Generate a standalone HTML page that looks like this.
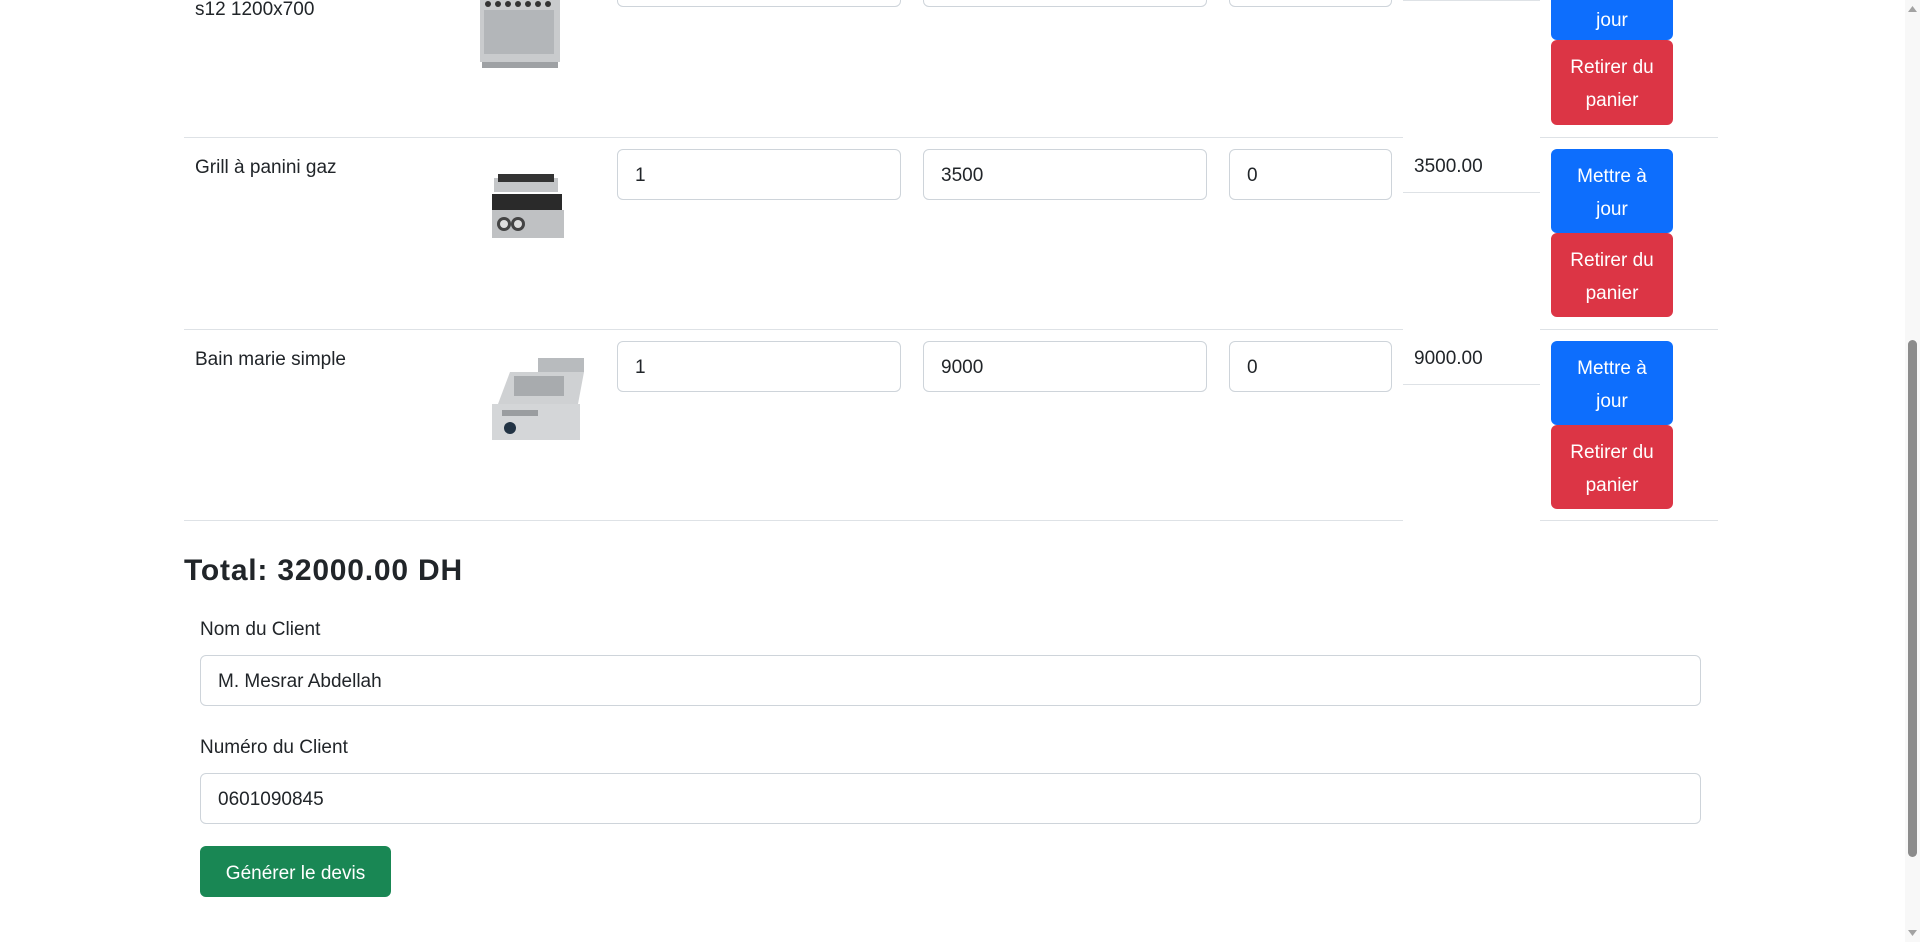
<!DOCTYPE html>
<html><head><meta charset="utf-8"><style>
*{box-sizing:border-box;margin:0;padding:0}
body{width:1920px;height:942px;overflow:hidden;background:#fff;font-family:"Liberation Sans",sans-serif;color:#212529;position:relative}
.a{position:absolute}
.t{font-size:19px;line-height:24px}
.in{position:absolute;border:1px solid #ced4da;border-radius:6px;background:#fff;font-size:19px;padding-left:17px;padding-top:3px;display:flex;align-items:center}
.hl{position:absolute;height:1px;background:#dee2e6}
.btn{position:absolute;color:#fff;font-size:19px;line-height:33px;text-align:center;border-radius:6px;display:flex;align-items:center;justify-content:center;padding-top:3px}
.b{background:#0d6efd}.r{background:#dc3545}
</style></head><body>

<div class="a t" style="left:195px;top:-2px">s12 1200x700</div>
<svg class="a" style="left:476px;top:0" width="110" height="72" viewBox="0 0 110 72">
<rect x="4" y="0" width="80" height="62" fill="#c9cbcd"/><rect x="8" y="10" width="70" height="44" fill="#b3b6b9"/>
<g fill="#333"><circle cx="12" cy="4" r="3"/><circle cx="22" cy="4" r="3"/><circle cx="32" cy="4" r="3"/><circle cx="42" cy="4" r="3"/><circle cx="52" cy="4" r="3"/><circle cx="62" cy="4" r="3"/><circle cx="72" cy="4" r="3"/></g>
<rect x="6" y="62" width="76" height="6" fill="#9ea1a4"/></svg>
<div class="in" style="left:617px;top:-44px;width:284px;height:51px"></div>
<div class="in" style="left:923px;top:-44px;width:284px;height:51px"></div>
<div class="in" style="left:1229px;top:-44px;width:163px;height:51px"></div>
<div class="hl" style="left:1403px;top:0;width:137px"></div>
<div class="btn b" style="left:1551px;top:-44px;width:122px;height:84px;align-items:flex-end;padding-bottom:3px">jour</div>
<div class="btn r" style="left:1551px;top:40px;width:122px;height:85px">Retirer du<br>panier</div>
<div class="hl" style="left:184px;top:137px;width:1219px"></div>
<div class="hl" style="left:1540px;top:137px;width:178px"></div>

<div class="a t" style="left:195px;top:156px">Grill à panini gaz</div>
<svg class="a" style="left:486px;top:172px" width="96" height="76" viewBox="0 0 96 76">
<rect x="8" y="6" width="64" height="14" fill="#c4c6c8"/><rect x="12" y="2" width="56" height="8" fill="#333"/>
<rect x="6" y="22" width="70" height="16" fill="#2a2a2a"/><rect x="6" y="38" width="72" height="28" fill="#bfc1c3"/>
<circle cx="18" cy="52" r="7" fill="#444"/><circle cx="32" cy="52" r="7" fill="#444"/><circle cx="18" cy="52" r="4" fill="#ddd"/><circle cx="32" cy="52" r="4" fill="#ddd"/></svg>
<div class="in" style="left:617px;top:149px;width:284px;height:51px">1</div>
<div class="in" style="left:923px;top:149px;width:284px;height:51px">3500</div>
<div class="in" style="left:1229px;top:149px;width:163px;height:51px">0</div>
<div class="a t" style="left:1414px;top:155px">3500.00</div>
<div class="hl" style="left:1403px;top:192px;width:137px"></div>
<div class="btn b" style="left:1551px;top:149px;width:122px;height:84px">Mettre à<br>jour</div>
<div class="btn r" style="left:1551px;top:233px;width:122px;height:84px">Retirer du<br>panier</div>
<div class="hl" style="left:184px;top:329px;width:1219px"></div>
<div class="hl" style="left:1540px;top:329px;width:178px"></div>

<div class="a t" style="left:195px;top:348px">Bain marie simple</div>
<svg class="a" style="left:480px;top:352px" width="110" height="100" viewBox="0 0 110 100">
<rect x="58" y="6" width="46" height="14" fill="#b8bbbe"/><polygon points="30,20 104,20 98,52 18,52" fill="#cfd1d3"/>
<rect x="34" y="24" width="50" height="20" fill="#a8abae"/><rect x="12" y="52" width="88" height="36" fill="#d4d6d8"/>
<circle cx="30" cy="76" r="6" fill="#234"/><rect x="22" y="58" width="36" height="6" fill="#9a9da0"/></svg>
<div class="in" style="left:617px;top:341px;width:284px;height:51px">1</div>
<div class="in" style="left:923px;top:341px;width:284px;height:51px">9000</div>
<div class="in" style="left:1229px;top:341px;width:163px;height:51px">0</div>
<div class="a t" style="left:1414px;top:347px">9000.00</div>
<div class="hl" style="left:1403px;top:384px;width:137px"></div>
<div class="btn b" style="left:1551px;top:341px;width:122px;height:84px">Mettre à<br>jour</div>
<div class="btn r" style="left:1551px;top:425px;width:122px;height:84px">Retirer du<br>panier</div>
<div class="hl" style="left:184px;top:520px;width:1219px"></div>
<div class="hl" style="left:1540px;top:520px;width:178px"></div>

<div class="a" style="left:184px;top:553px;font-size:30px;font-weight:bold;line-height:36px;letter-spacing:0.8px">Total: 32000.00 DH</div>
<div class="a t" style="left:200px;top:618px">Nom du Client</div>
<div class="in" style="left:200px;top:655px;width:1501px;height:51px">M. Mesrar Abdellah</div>
<div class="a t" style="left:200px;top:736px">Numéro du Client</div>
<div class="in" style="left:200px;top:773px;width:1501px;height:51px">0601090845</div>
<div class="btn" style="left:200px;top:846px;width:191px;height:51px;background:#198754">Générer le devis</div>

<div class="a" style="left:1905px;top:0;width:15px;height:942px;background:#f8f8f8"></div>
<div class="a" style="left:1908px;top:340px;width:9px;height:517px;background:#8c8c8c;border-radius:5px"></div>
<svg class="a" style="left:1905px;top:4px" width="15" height="10"><polygon points="3,8 12,8 7.5,2" fill="#a3a3a3"/></svg>
<svg class="a" style="left:1905px;top:928px" width="15" height="10"><polygon points="3,2 12,2 7.5,8" fill="#a3a3a3"/></svg>
</body></html>
